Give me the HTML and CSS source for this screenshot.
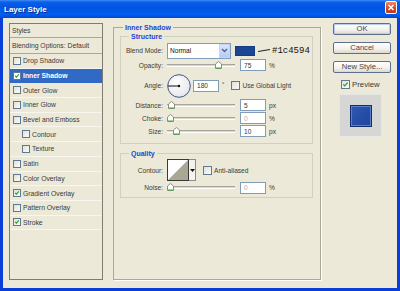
FILE: index.html
```html
<!DOCTYPE html>
<html lang="en">
<head>
  <meta charset="UTF-8">
  <title>Layer Style</title>
  <link rel="stylesheet" href="styles.css">
</head>
<body>
  <div class="window">
    <div class="titlebar">
      <span class="title">Layer Style</span>
      <span class="close">
        <svg width="10" height="11" viewBox="0 0 10 11"><path d="M2.5 3 L7.5 8 M7.5 3 L2.5 8" stroke="#fff" stroke-width="1.6"/></svg>
      </span>
    </div>

    <div class="body">
      <ul class="styles">
        <li class="head first">Styles</li>
        <li class="head">Blending Options: Default</li>
        <li><span class="cb"></span>Drop Shadow</li>
        <li class="sel"><span class="cb on"><svg viewBox="0 0 8 8"><path d="M1.5 3.8 L3.2 5.6 L6.5 1.8" stroke="#21a121" stroke-width="1.4" fill="none"/></svg></span>Inner Shadow</li>
        <li><span class="cb"></span>Outer Glow</li>
        <li><span class="cb"></span>Inner Glow</li>
        <li><span class="cb"></span>Bevel and Emboss</li>
        <li class="sub"><span class="cb"></span>Contour</li>
        <li class="sub"><span class="cb"></span>Texture</li>
        <li><span class="cb"></span>Satin</li>
        <li><span class="cb"></span>Color Overlay</li>
        <li><span class="cb on"><svg viewBox="0 0 8 8"><path d="M1.5 3.8 L3.2 5.6 L6.5 1.8" stroke="#21a121" stroke-width="1.4" fill="none"/></svg></span>Gradient Overlay</li>
        <li><span class="cb"></span>Pattern Overlay</li>
        <li><span class="cb on"><svg viewBox="0 0 8 8"><path d="M1.5 3.8 L3.2 5.6 L6.5 1.8" stroke="#21a121" stroke-width="1.4" fill="none"/></svg></span>Stroke</li>
      </ul>

      <fieldset class="group outer">
        <legend>Inner Shadow</legend>

        <fieldset class="group inner structure">
          <legend>Structure</legend>

          <div class="row blend">
            <span class="lbl">Blend Mode:</span>
            <span class="select">
              <span class="select-text">Normal</span>
              <span class="select-btn">
                <svg width="7" height="5" viewBox="0 0 7 5"><path d="M1 1 L3.5 3.5 L6 1" stroke="#4d6185" stroke-width="1.3" fill="none"/></svg>
              </span>
            </span>
            <span class="swatch"></span>
            <span class="pointer"></span>
            <span class="hex">#1c4594</span>
          </div>

          <div class="row">
            <span class="lbl">Opacity:</span>
            <span class="track"><span class="thumb" style="left:48px"><svg width="7" height="8" viewBox="0 0 7 8"><path d="M0.5 7.5 V3 L3.5 0.5 L6.5 3 V7.5 Z" fill="#fff" stroke="#8d8c83"/><path d="M1 7 H6" stroke="#28b428"/></svg></span></span>
            <span class="field">75</span><span class="unit">%</span>
          </div>

          <div class="row angle">
            <span class="lbl">Angle:</span>
            <svg class="dial" width="24" height="24" viewBox="0 0 24 24">
              <defs>
                <radialGradient id="dialFill" cx="0.4" cy="0.35" r="0.7">
                  <stop offset="0" stop-color="#ffffff"/>
                  <stop offset="1" stop-color="#e4e4ec"/>
                </radialGradient>
              </defs>
              <circle cx="12" cy="12" r="11.3" fill="url(#dialFill)" stroke="#42558c" stroke-width="1"/>
              <path d="M1 12 H12" stroke="#111" stroke-width="1"/>
              <circle cx="12" cy="12" r="1.2" fill="#111"/>
            </svg>
            <span class="field wide">180</span>
            <span class="degree">°</span>
            <span class="cb big"></span>
            <span class="cb-text">Use Global Light</span>
          </div>

          <div class="row">
            <span class="lbl">Distance:</span>
            <span class="track"><span class="thumb" style="left:1px"><svg width="7" height="8" viewBox="0 0 7 8"><path d="M0.5 7.5 V3 L3.5 0.5 L6.5 3 V7.5 Z" fill="#fff" stroke="#8d8c83"/><path d="M1 7 H6" stroke="#28b428"/></svg></span></span>
            <span class="field">5</span><span class="unit">px</span>
          </div>

          <div class="row">
            <span class="lbl">Choke:</span>
            <span class="track"><span class="thumb" style="left:0px"><svg width="7" height="8" viewBox="0 0 7 8"><path d="M0.5 7.5 V3 L3.5 0.5 L6.5 3 V7.5 Z" fill="#fff" stroke="#8d8c83"/><path d="M1 7 H6" stroke="#28b428"/></svg></span></span>
            <span class="field off">0</span><span class="unit">%</span>
          </div>

          <div class="row">
            <span class="lbl">Size:</span>
            <span class="track"><span class="thumb" style="left:6px"><svg width="7" height="8" viewBox="0 0 7 8"><path d="M0.5 7.5 V3 L3.5 0.5 L6.5 3 V7.5 Z" fill="#fff" stroke="#8d8c83"/><path d="M1 7 H6" stroke="#28b428"/></svg></span></span>
            <span class="field">10</span><span class="unit">px</span>
          </div>
        </fieldset>

        <fieldset class="group inner quality">
          <legend>Quality</legend>

          <div class="row contour">
            <span class="lbl">Contour:</span>
            <span class="curve">
              <svg width="22" height="22" viewBox="0 0 22 22"><rect x="0.5" y="0.5" width="21" height="21" fill="#fff" stroke="#3a3a3a"/><path d="M21 1 V21 H1 Z" fill="#aaa795"/></svg>
              <span class="curve-btn">
                <svg width="5" height="3" viewBox="0 0 5 3"><path d="M0 0 H5 L2.5 3 Z" fill="#111"/></svg>
              </span>
            </span>
            <span class="cb big"></span>
            <span class="cb-text">Anti-aliased</span>
          </div>

          <div class="row">
            <span class="lbl">Noise:</span>
            <span class="track"><span class="thumb" style="left:0px"><svg width="7" height="8" viewBox="0 0 7 8"><path d="M0.5 7.5 V3 L3.5 0.5 L6.5 3 V7.5 Z" fill="#fff" stroke="#8d8c83"/><path d="M1 7 H6" stroke="#28b428"/></svg></span></span>
            <span class="field off">0</span><span class="unit">%</span>
          </div>
        </fieldset>
      </fieldset>

      <div class="side">
        <button class="btn default">OK</button>
        <button class="btn">Cancel</button>
        <button class="btn">New Style...</button>
        <label class="preview-check">
          <span class="cb big on"><svg viewBox="0 0 8 8"><path d="M1.5 3.8 L3.2 5.6 L6.5 1.8" stroke="#21a121" stroke-width="1.4" fill="none"/></svg></span>
          Preview
        </label>
        <div class="preview">
          <div class="preview-square"></div>
        </div>
      </div>
    </div>
  </div>
</body>
</html>
```

FILE: styles.css
```css
html, body {
  margin: 0;
  padding: 0;
  background: #ece9d8;
  font-family: "Liberation Sans", "DejaVu Sans", sans-serif;
}

.window {
  width: 400px;
  height: 291px;
  display: flex;
  flex-direction: column;
  overflow: hidden;
}

/* title bar */
.titlebar {
  height: 18px;
  flex: none;
  display: flex;
  align-items: center;
  justify-content: space-between;
  padding: 0 3px 0 4px;
  background: linear-gradient(to bottom, #3d8cf7 0%, #0a5ee8 12%, #0054e3 45%, #005ef0 80%, #0049cc 100%);
}

.title {
  color: #fff;
  font-weight: bold;
  font-size: 8px;
  text-shadow: 1px 1px 0 #0a2a8a;
}

.close {
  width: 10px;
  height: 11px;
  margin-top: -3px;
  border: 1px solid #fff;
  border-radius: 2px;
  background: linear-gradient(to bottom, #f0876a, #d9431f 60%, #c23a18);
  display: flex;
}

/* window body */
.body {
  flex: 1;
  display: flex;
  padding: 5px 0 8px 6px;
  border: 3px solid #0a3ed8;
  border-top: none;
  background: #ece9d8;
}

/* left list */
.styles {
  width: 94px;
  box-sizing: border-box;
  margin: 0 10px 0 0;
  padding: 0;
  list-style: none;
  border: 1px solid #7e7d74;
  font-size: 6.8px;
  color: #3a3a3a;
}

.styles li {
  height: 14.7px;
  box-sizing: border-box;
  display: flex;
  align-items: center;
  padding-left: 3px;
  border-bottom: 1px solid #f7f6ef;
}

.styles li.head {
  height: 16px;
  padding-left: 2px;
  border-bottom: 1px solid #a9a89c;
}

.styles li.head.first {
  height: 14px;
}

.styles li.sub {
  padding-left: 12px;
}

.styles li.sel {
  background: #316ac5;
  color: #fff;
  font-weight: bold;
  border-bottom-color: #316ac5;
}

/* checkboxes */
.cb {
  width: 8px;
  height: 8px;
  flex: none;
  box-sizing: border-box;
  border: 1px solid #5f7893;
  background: linear-gradient(135deg, #e2e0d6, #fbfbf8);
  margin-right: 2px;
  display: flex;
}

.cb svg {
  width: 100%;
  height: 100%;
}

.cb.big {
  width: 9px;
  height: 9px;
}

.sel .cb {
  background: #fff;
}

/* group boxes */
.group {
  margin: 0;
  min-width: 0;
}

.group legend {
  font-weight: bold;
  font-size: 7px;
  line-height: 9px;
  color: #1d43d8;
  padding: 0 2px;
}

.outer {
  width: 208px;
  box-sizing: border-box;
  padding: 0 7px 0 6px;
  border: 1px solid #aca899;
  box-shadow: 1px 1px 0 #fff;
}

.outer > legend {
  margin-left: 3px;
}

.inner {
  padding: 1.5px 0 5px 0;
  border: 1px solid #d0d0bf;
}

.inner > legend {
  margin-left: 8px;
}

.quality {
  margin-top: 5px;
  padding-bottom: 3px;
}

/* rows */
.row {
  display: flex;
  align-items: center;
  height: 13px;
  font-size: 6.6px;
  color: #3a3a3a;
}

.row.blend {
  height: 16px;
}

.row.angle {
  height: 26px;
  margin-top: 1px;
}

.row.contour {
  height: 22px;
}

.lbl {
  width: 42px;
  flex: none;
  text-align: right;
  margin-right: 4px;
}

.select {
  width: 64px;
  height: 16px;
  box-sizing: border-box;
  border: 1px solid #7f9db9;
  background: #fff;
  display: flex;
  align-items: center;
  justify-content: space-between;
}

.select-text {
  color: #111;
  padding-left: 2px;
}

.select-btn {
  width: 11px;
  height: 14px;
  box-sizing: border-box;
  border: 1px solid #c6d6f7;
  background: linear-gradient(to bottom, #d8e4fd, #b5cbf7);
  display: flex;
  align-items: center;
  justify-content: center;
}

.swatch {
  width: 20px;
  height: 10px;
  margin-left: 4px;
  background: #1c4594;
  box-sizing: border-box;
  border: 1px solid #173a80;
}

.pointer {
  width: 12px;
  height: 1px;
  margin-left: 3px;
  background: #222;
  transform: rotate(-10deg);
}

.hex {
  margin-left: 2px;
  font-family: "Liberation Mono", "DejaVu Sans Mono", monospace;
  font-size: 9px;
  color: #111;
}

/* sliders */
.track {
  width: 68px;
  height: 3px;
  flex: none;
  box-sizing: border-box;
  position: relative;
  border-top: 1px solid #a8a597;
  border-bottom: 1px solid #fff;
  background: #dcd9cc;
}

.thumb {
  position: absolute;
  top: -4px;
  display: flex;
}

.field {
  width: 26px;
  height: 12px;
  box-sizing: border-box;
  margin-left: 5px;
  padding-left: 3px;
  border: 1px solid #7f9db9;
  background: #fff;
  display: flex;
  align-items: center;
  color: #333;
}

.field.off {
  color: #b0b0b0;
}

.field.wide {
  margin-left: 2px;
}

.unit {
  margin-left: 3px;
}

.dial {
  flex: none;
}

.degree {
  align-self: flex-start;
  margin: 8px 0 0 3px;
  font-size: 6px;
}

.angle .cb {
  margin-left: 7px;
}

.cb-text {
  white-space: nowrap;
}

/* contour */
.curve {
  display: flex;
  height: 22px;
}

.curve-btn {
  width: 7px;
  box-sizing: border-box;
  border: 1px solid #8d8c83;
  border-left: none;
  background: #f4f3ee;
  display: flex;
  align-items: center;
  justify-content: center;
}

.contour .cb {
  margin-left: 7px;
}

/* right side */
.side {
  width: 58px;
  margin-left: 12px;
  display: flex;
  flex-direction: column;
}

.btn {
  height: 12px;
  padding: 0;
  margin: 0 0 7px 0;
  border: 1px solid #5d6f8c;
  border-radius: 2px;
  background: linear-gradient(to bottom, #ffffff, #f2f1ec 60%, #dcd8cc);
  font-family: inherit;
  font-size: 7.6px;
  line-height: 10px;
  color: #444;
}

.btn.default {
  box-shadow: inset 0 0 0 1px #b9cdf4;
}

.preview-check {
  display: flex;
  align-items: center;
  margin: -1px 0 0 8px;
  height: 10px;
  font-size: 7.8px;
  color: #3a3a3a;
}

.preview {
  width: 43px;
  height: 43px;
  box-sizing: border-box;
  margin: 5px 0 0 6px;
  background: #d6d6d4;
  border: 1px solid #e6e6e2;
  display: flex;
  align-items: center;
  justify-content: center;
}

.preview-square {
  width: 22px;
  height: 22px;
  box-sizing: border-box;
  border: 1px solid #132c6c;
  background: linear-gradient(135deg, #2f58b2, #1f459b);
  box-shadow: inset 0 0 0 1px #5b7fc8;
}
```
